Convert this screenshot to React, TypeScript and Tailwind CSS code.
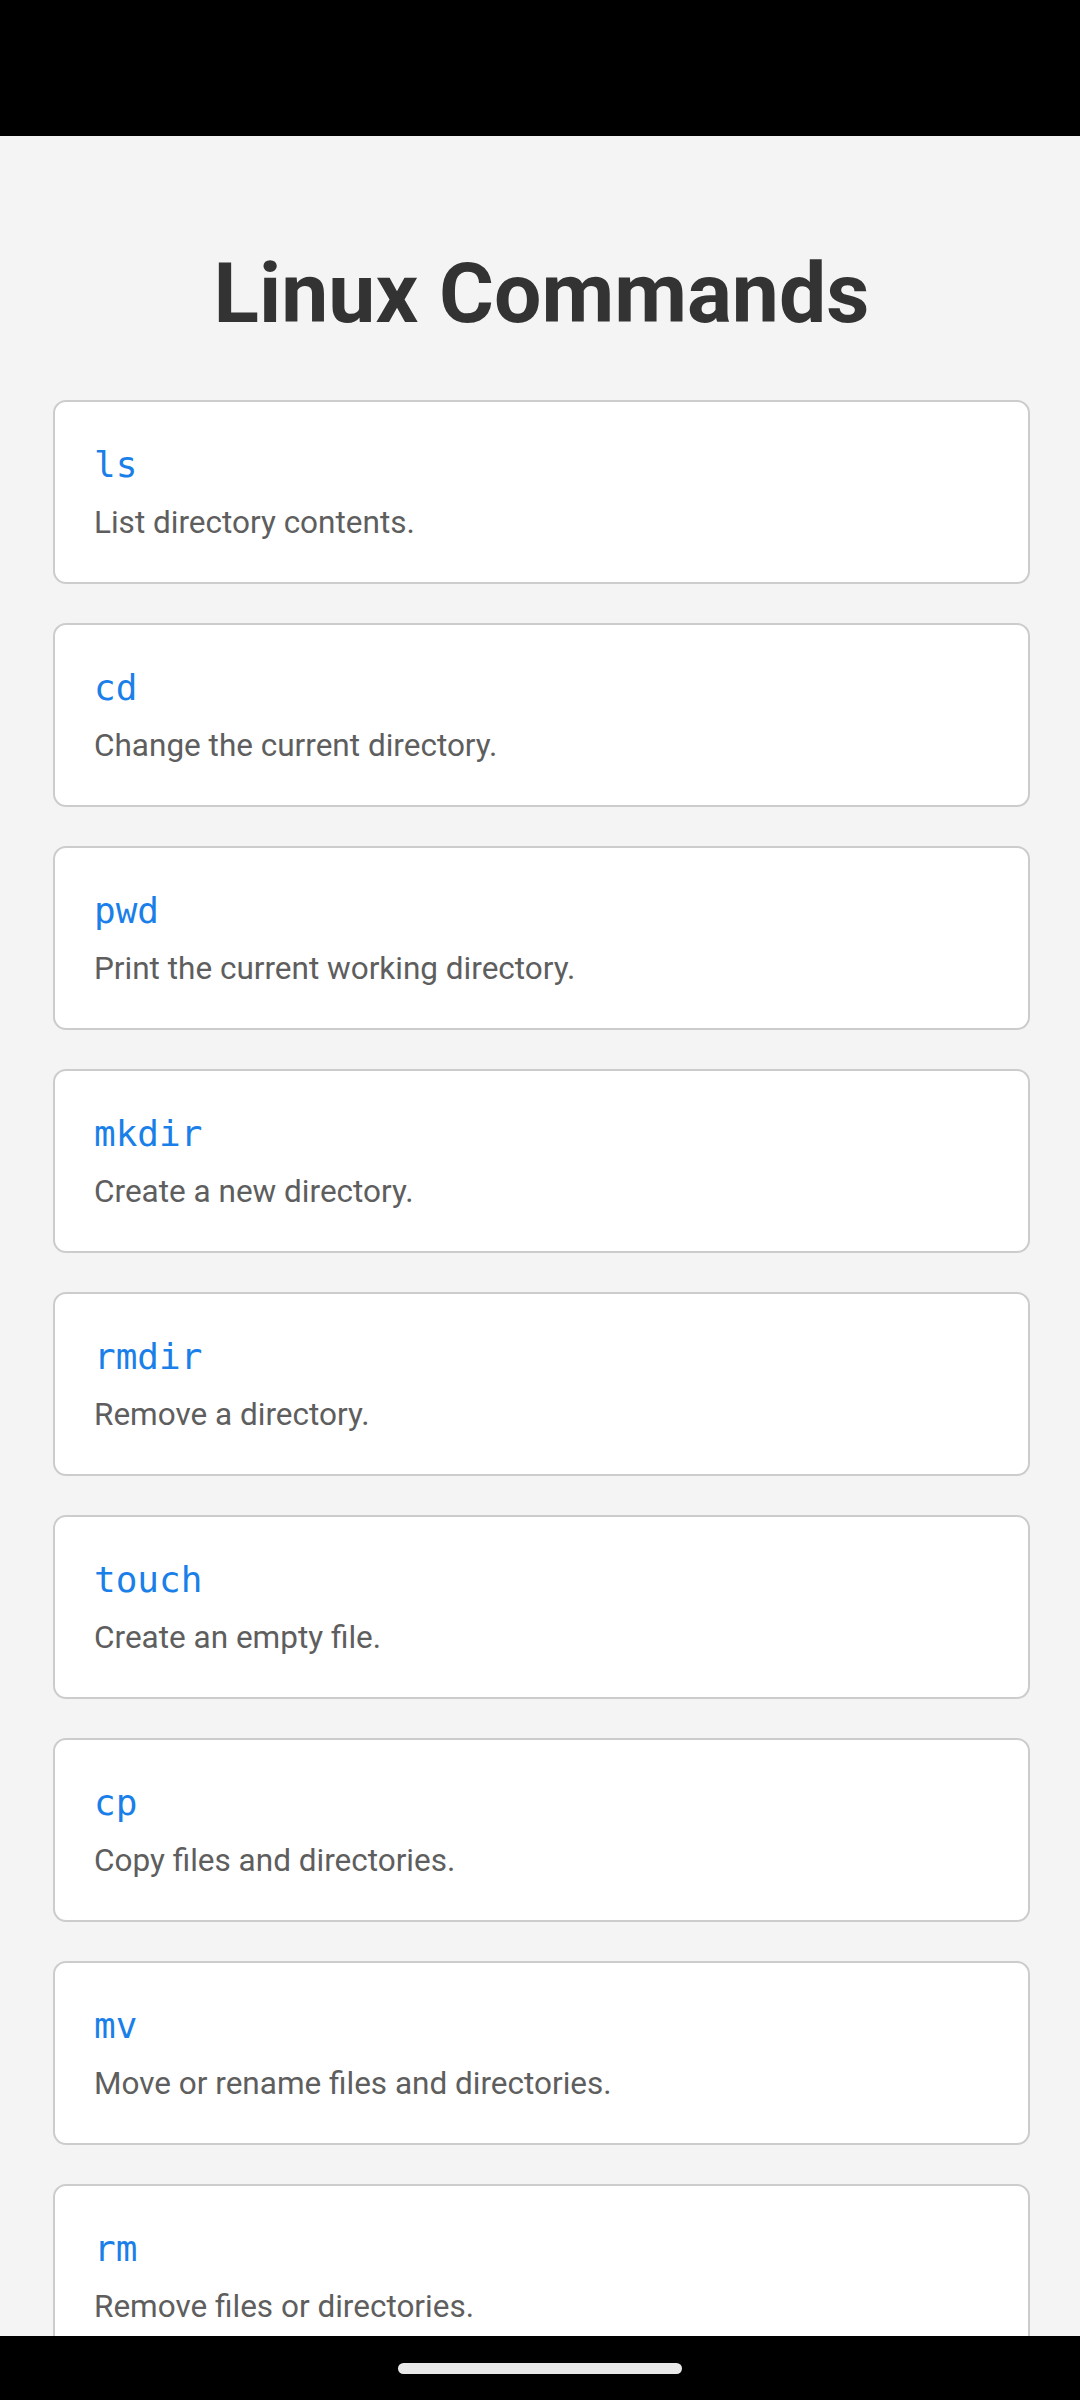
import React from 'react';

const commands = [
  { name: 'ls', desc: 'List directory contents.' },
  { name: 'cd', desc: 'Change the current directory.' },
  { name: 'pwd', desc: 'Print the current working directory.' },
  { name: 'mkdir', desc: 'Create a new directory.' },
  { name: 'rmdir', desc: 'Remove a directory.' },
  { name: 'touch', desc: 'Create an empty file.' },
  { name: 'cp', desc: 'Copy files and directories.' },
  { name: 'mv', desc: 'Move or rename files and directories.' },
  { name: 'rm', desc: 'Remove files or directories.' },
  { name: 'cat', desc: 'Concatenate and display file contents.' },
];

const App: React.FC = () => {
  return (
    <div className="relative h-[2400px] w-[1080px] overflow-hidden bg-[#f4f4f4] font-['Roboto',sans-serif]">
      <div className="h-[136px] bg-black" />

      <div className="pl-[53px] pr-[50px] pt-[108px]">
        <h1 className="mb-[57px] text-center text-[84px] font-bold leading-[99px] text-[#333333]">
          Linux Commands
        </h1>

        <div className="flex flex-col gap-[39px]">
          {commands.map((cmd) => (
            <div
              key={cmd.name}
              className="rounded-[13px] border-2 border-[#cccccc] bg-white px-[39px] pb-[40px] pt-[41px]"
            >
              <h3 className="font-['DejaVu_Sans_Mono',monospace] text-[36px] font-normal leading-[44px] text-[#1a7fe8]">
                {cmd.name}
              </h3>
              <p className="mt-[17px] text-[31.5px] leading-[38px] text-[#5e5e5e]">{cmd.desc}</p>
            </div>
          ))}
        </div>
      </div>

      <div className="absolute bottom-0 left-0 flex h-[64px] w-full items-start justify-center bg-black pt-[27px]">
        <div className="h-[11px] w-[284px] rounded-full bg-[#e8e8e8]" />
      </div>
    </div>
  );
};

export default App;
